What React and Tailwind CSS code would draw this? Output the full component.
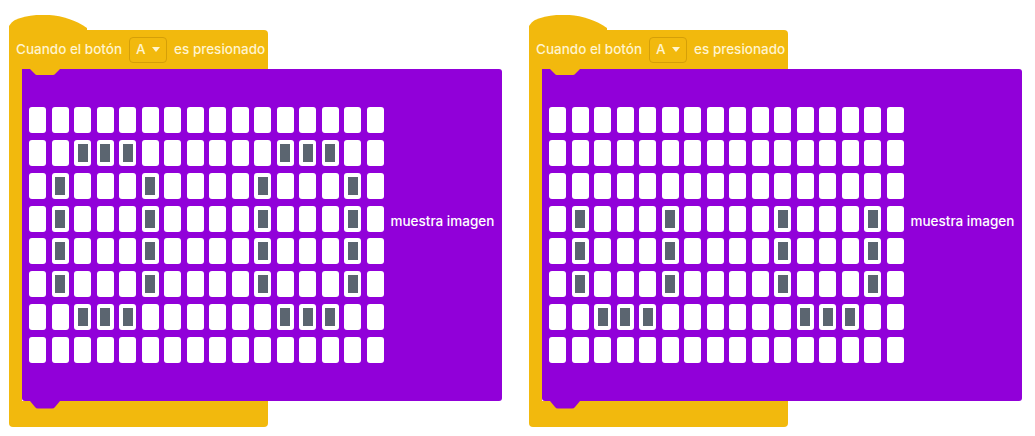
import React from "react";

const LEFT = [
  [],
  [2, 3, 4, 11, 12, 13],
  [1, 5, 10, 14],
  [1, 5, 10, 14],
  [1, 5, 10, 14],
  [1, 5, 10, 14],
  [2, 3, 4, 11, 12, 13],
  [],
];

const RIGHT = [
  [],
  [],
  [],
  [1, 5, 10, 14],
  [1, 5, 10, 14],
  [1, 5, 10, 14],
  [2, 3, 4, 11, 12, 13],
  [],
];

const YELLOW = "#f2b90d";

function Cell({ on }) {
  return (
    <div className="w-[17px] h-[26px] rounded-[3px] bg-white flex items-center justify-center">
      {on && <div className="w-[10px] h-[18px] bg-[#5b6570]" />}
    </div>
  );
}

function Block({ pattern }) {
  const cells = [];
  for (let r = 0; r < 8; r++) {
    for (let c = 0; c < 16; c++) {
      cells.push(<Cell key={r + "-" + c} on={pattern[r].includes(c)} />);
    }
  }
  return (
    <div className="flex flex-col w-[493px] shrink-0">
      {/* hat */}
      <svg width="80" height="15" viewBox="0 0 80 15" className="block">
        <path d="M0,15 L0,11 C2,8 4,6 6,5 C24,-3 56,-3 78,13 L78,15 Z" fill={YELLOW} />
      </svg>
      {/* header */}
      <div className="w-[259px] h-[39px] bg-[#f2b90d] rounded-tr-[4px] flex items-center pl-[7px] text-[13.5px] font-medium text-[#fff4cf]" style={{ fontFamily: "Inter, 'Open Sans', sans-serif" }}>
        <span>Cuando el botón</span>
        <div className="ml-[7px] w-[38px] h-[26px] border border-[#d59f08] rounded-[4px] flex items-center pl-[6px]">
          <span>A</span>
          <svg width="8" height="5" viewBox="0 0 8 5" className="ml-[6px]">
            <path d="M0,0 L8,0 L4,5 Z" fill="#fff4cf" />
          </svg>
        </div>
        <span className="ml-[7px]">es presionado</span>
      </div>
      {/* body */}
      <div className="flex">
        <div className="w-[13px] h-[332px] bg-[#f2b90d]" />
        <div className="relative w-[480px] h-[332px] bg-[#9100d9] rounded-r-[3px] rounded-bl-[3px] flex items-start">
          <svg width="30" height="6" viewBox="0 0 30 6" className="absolute left-[8px] top-0">
            <path d="M0,0 L30,0 L25,5 Q24.5,6 23,6 L7,6 Q5.5,6 5,5 Z" fill={YELLOW} />
          </svg>
          <div className="ml-[7px] mt-[38px] grid grid-cols-[repeat(16,17px)] grid-rows-[repeat(8,26px)] gap-x-[5.5px] gap-y-[6.86px]">
            {cells}
          </div>
          <span className="ml-[7px] mt-[142px] text-white text-[13.5px] font-medium" style={{ fontFamily: "Inter, 'Open Sans', sans-serif" }}>
            muestra imagen
          </span>
        </div>
      </div>
      {/* bottom bump */}
      <div className="relative w-[259px] h-[26px] bg-[#f2b90d] rounded-b-[4px]">
        <svg width="30" height="8" viewBox="0 0 30 8" className="absolute left-[21px] top-0">
          <path d="M0,0 L30,0 L25,6 Q24,7.5 22,7.5 L8,7.5 Q6,7.5 5,6 Z" fill="#9100d9" />
        </svg>
      </div>
    </div>
  );
}

export default function App() {
  return (
    <div className="w-[1035px] h-[436px] bg-white flex gap-[27px] pl-[9px] pt-[15px] overflow-hidden">
      <Block pattern={LEFT} />
      <Block pattern={RIGHT} />
    </div>
  );
}
